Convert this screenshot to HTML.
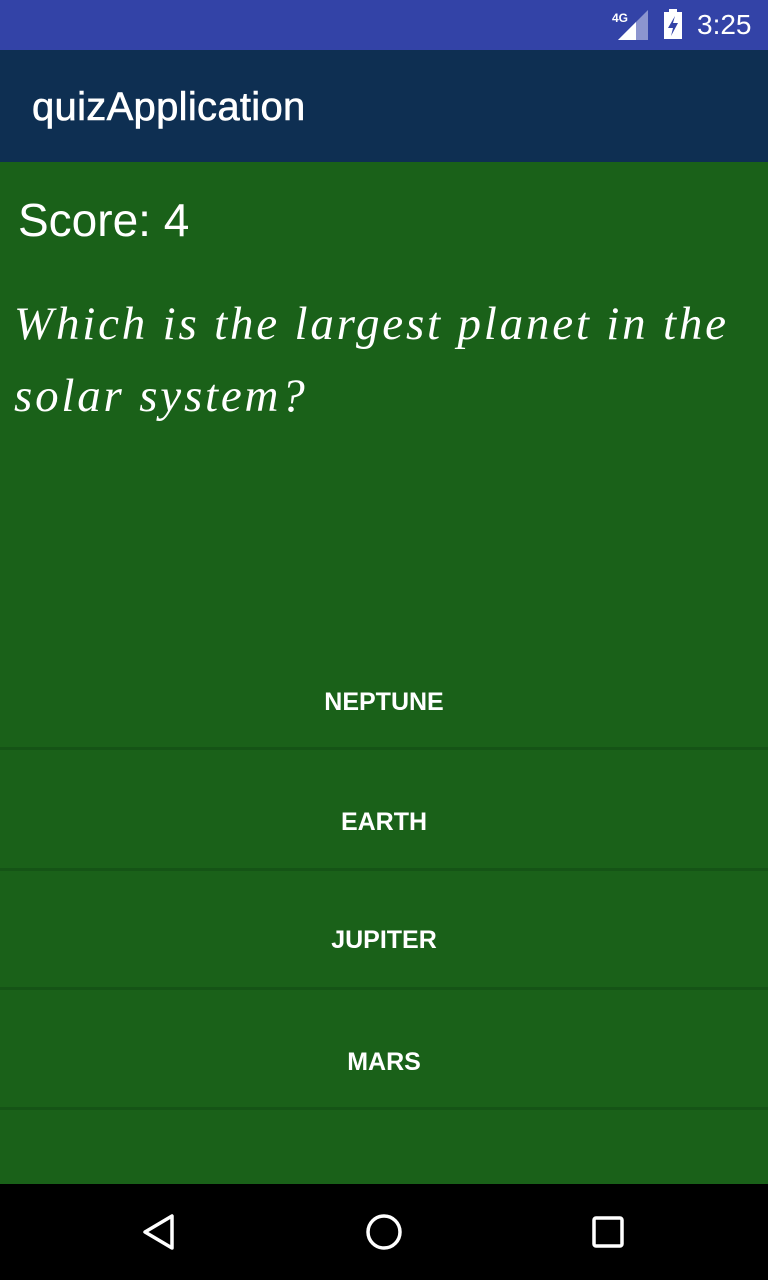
<!DOCTYPE html>
<html><head><style>
body{margin:0;width:768px;height:1280px;overflow:hidden;font-family:"Liberation Sans",sans-serif;background:#1a6119;position:relative}
.sb{position:absolute;top:0;left:0;width:768px;height:50px;background:#3343a7;color:#fff}
.ab{position:absolute;top:50px;left:0;width:768px;height:112px;background:#0e2f52;color:#fff}
.ab span{position:absolute;left:32px;top:35px;font-size:40px;letter-spacing:0.3px;-webkit-text-stroke:0.6px #fff}
.score{position:absolute;left:18px;top:193px;font-size:46px;color:#fff}
.q{position:absolute;left:14px;top:288px;width:760px;font-family:"Liberation Serif",serif;font-style:italic;font-size:47px;line-height:72px;color:#fff;letter-spacing:2.8px;white-space:nowrap}
.btn{position:absolute;left:0;width:768px;text-align:center;color:#fff;font-weight:bold;font-size:25px}
.sep{position:absolute;left:0;width:768px;height:3px;background:#155416}
.nav{position:absolute;top:1184px;left:0;width:768px;height:96px;background:#000}
</style></head><body>
<div class="sb">
<svg style="position:absolute;left:610px;top:10px" width="40" height="30"><text x="2" y="12" font-size="12" font-weight="bold" fill="#fff" font-family="Liberation Sans">4G</text><polygon points="8,30 38,30 38,0" fill="#8c95cf"/><polygon points="8,30 26,30 26,12" fill="#fff"/></svg>
<svg style="position:absolute;left:662px;top:9px" width="24" height="32"><rect x="7" y="0" width="8" height="4" fill="#fff"/><rect x="2" y="3" width="18" height="27" fill="#fff"/><polygon points="13,7 6,19 11,19 9,27 16,14 11,14" fill="#3343a7"/></svg>
<span style="position:absolute;left:697px;top:9px;font-size:28px">3:25</span>
</div>
<div class="ab"><span>quizApplication</span></div>
<div class="score">Score: 4</div>
<div class="q">Which is the largest planet in the<br>solar system?</div>
<div class="btn" style="top:688px">NEPTUNE</div>
<div class="sep" style="top:747px"></div>
<div class="btn" style="top:808px">EARTH</div>
<div class="sep" style="top:868px"></div>
<div class="btn" style="top:926px">JUPITER</div>
<div class="sep" style="top:987px"></div>
<div class="btn" style="top:1048px">MARS</div>
<div class="sep" style="top:1107px"></div>
<div class="nav">
<svg style="position:absolute;left:140px;top:28px" width="40" height="40"><polygon points="32,4 32,36 5,20" fill="none" stroke="#fff" stroke-width="3.5" stroke-linejoin="round"/></svg>
<svg style="position:absolute;left:364px;top:28px" width="40" height="40"><circle cx="20" cy="20" r="16" fill="none" stroke="#fff" stroke-width="3.5"/></svg>
<svg style="position:absolute;left:590px;top:30px" width="36" height="36"><rect x="4" y="4" width="28" height="28" rx="2" fill="none" stroke="#fff" stroke-width="3.5"/></svg>
</div>
</body></html>
